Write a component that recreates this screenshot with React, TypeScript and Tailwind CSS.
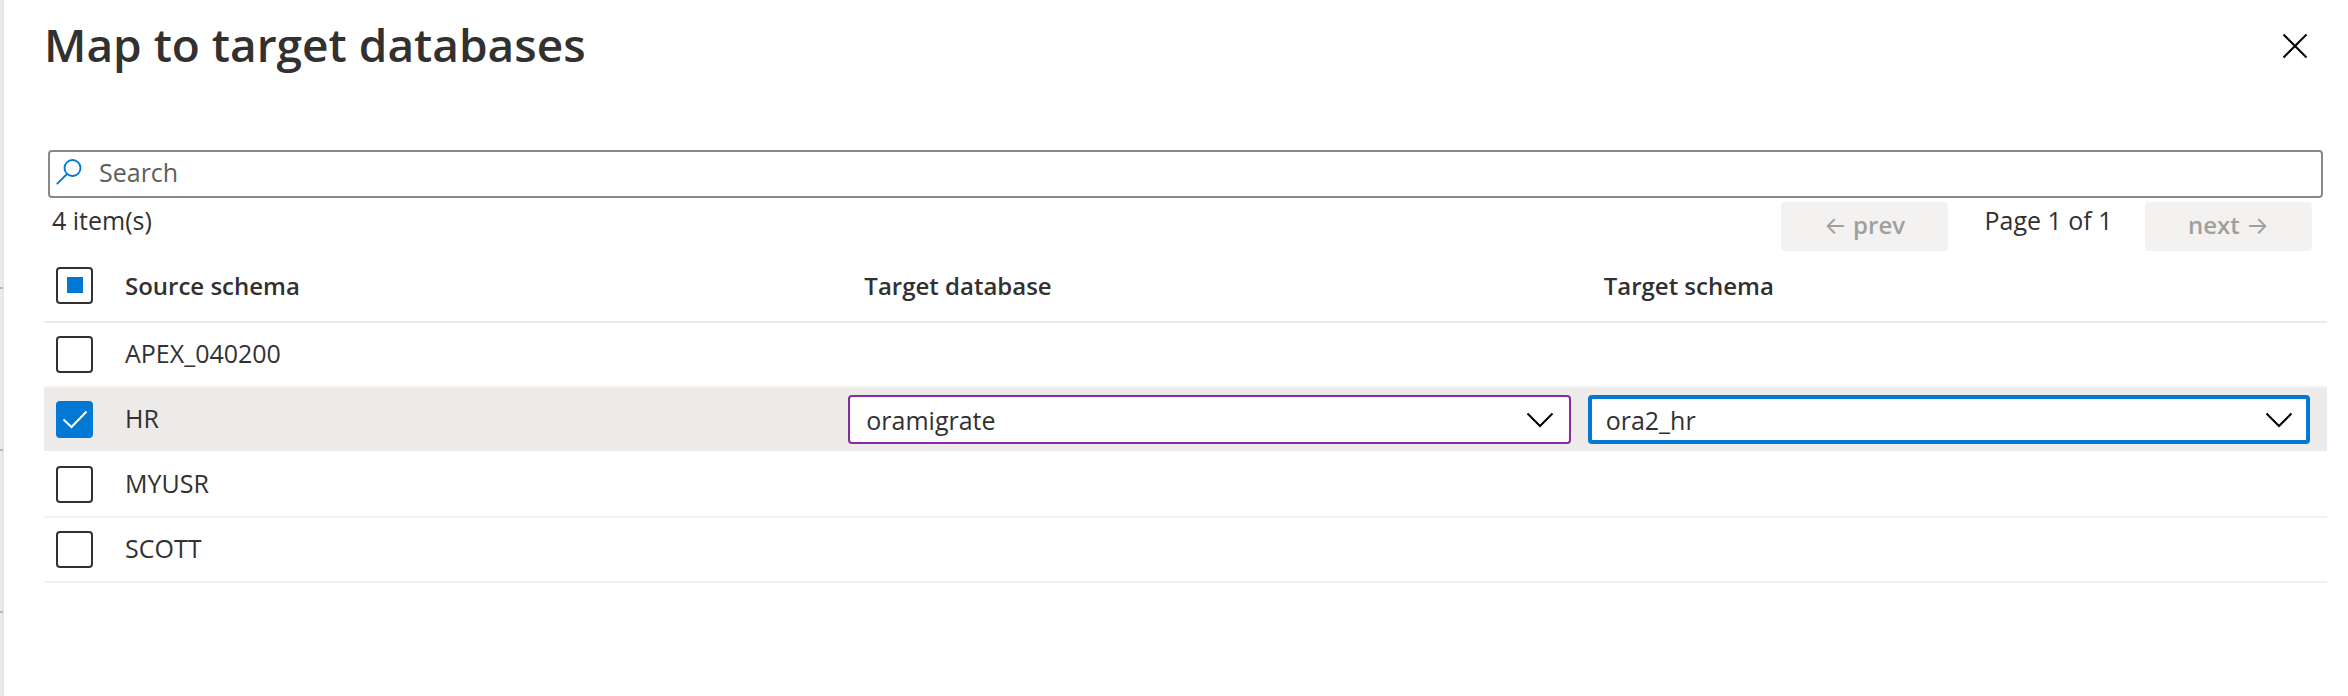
import { useEffect, useRef, useState } from "react";

const schemas = ["APEX_040200", "HR", "MYUSR", "SCOTT"];

type CheckboxProps = {
  label: string;
  checked: boolean;
  mixed?: boolean;
  onChange: (checked: boolean) => void;
};

function Checkbox({ label, checked, mixed = false, onChange }: CheckboxProps) {
  const ref = useRef<HTMLInputElement>(null);
  useEffect(() => {
    if (ref.current) ref.current.indeterminate = mixed;
  }, [mixed]);
  return (
    <span className="grid size-[37px] place-items-center">
      <input
        ref={ref}
        type="checkbox"
        aria-label={label}
        checked={checked}
        onChange={(e) => onChange(e.target.checked)}
        className="col-start-1 row-start-1 size-[37px] appearance-none rounded border-2 border-[#323130] bg-white checked:border-[#0078d4] checked:bg-[#0078d4]"
      />
      {mixed && <span className="pointer-events-none col-start-1 row-start-1 size-4 bg-[#0078d4]" />}
      {checked && (
        <svg viewBox="0 0 37 37" className="pointer-events-none col-start-1 row-start-1 size-[37px]" fill="none" stroke="white" strokeWidth="2">
          <path d="M7.5 18.5 L15.5 26 L30.5 10.5" />
        </svg>
      )}
    </span>
  );
}

type DropdownProps = { label: string; value: string; active?: boolean };

function Dropdown({ label, value, active = false }: DropdownProps) {
  return (
    <div className="grid items-center pr-[17px]">
      <select
        aria-label={label}
        defaultValue={value}
        className={
          "col-start-1 row-start-1 h-[49px] w-full appearance-none rounded bg-white pt-0.5 pr-14 outline-none " +
          (active ? "border-4 border-[#0078d4] pl-3.5" : "border-2 border-[#8c28a5] pl-4")
        }
      >
        <option>{value}</option>
      </select>
      <svg viewBox="0 0 28 16" className="pointer-events-none col-start-1 row-start-1 mr-[17px] h-4 w-7 justify-self-end" fill="none" stroke="black" strokeWidth="2">
        <path d="M1.5 1.5 L14 14 L26.5 1.5" />
      </svg>
    </div>
  );
}

export default function App() {
  const [selected, setSelected] = useState<string[]>(["HR"]);
  const all = selected.length === schemas.length;
  const toggle = (name: string, on: boolean) =>
    setSelected((s) => (on ? [...s, name] : s.filter((n) => n !== name)));

  return (
    <div className="flex min-h-screen bg-white font-['Open_Sans','Noto_Sans',sans-serif] text-[25px] text-[#323130]">
      <div className="flex w-1 shrink-0 flex-col gap-40 bg-linear-to-r from-[#ededed] to-[#e3e3e3] pt-[287px]">
        <span className="h-0.5 w-[3px] bg-[#b8b8b8]" />
        <span className="h-0.5 w-[3px] bg-[#b8b8b8]" />
        <span className="h-0.5 w-[3px] bg-[#b8b8b8]" />
      </div>
      <main className="min-w-0 flex-1 pr-[21px] pl-10">
        <header className="flex h-[150px] items-start justify-between pt-2">
          <h1 className="text-[46px] leading-[72px] font-semibold">Map to target databases</h1>
          <button type="button" aria-label="Close" className="mt-5 mr-3.5 grid size-9 place-items-center">
            <svg viewBox="0 0 26 26" className="size-[26px]" fill="none" stroke="black" strokeWidth="2">
              <path d="M1.5 1.5 L24.5 24.5 M24.5 1.5 L1.5 24.5" />
            </svg>
          </button>
        </header>

        <label className="mr-1 ml-1 flex h-12 items-center rounded border-2 border-[#8a8886] pl-1.5">
          <svg viewBox="0 0 26 26" className="mb-1 size-[26px] shrink-0" fill="none" stroke="#0078d4" strokeWidth="1.8">
            <circle cx="16.5" cy="9" r="8" />
            <path d="M11 15 L0.8 25.2" />
          </svg>
          <input type="text" aria-label="Search" placeholder="Search" className="ml-[17px] min-w-0 flex-1 pb-0.5 outline-none placeholder:text-[#605e5c]" />
        </label>

        <div className="flex h-[49px] items-start pr-[15px] pl-2">
          <p className="leading-[44px]">4 item(s)</p>
          <div className="ml-auto flex items-start">
            <button type="button" disabled className="mt-1 h-[49px] w-[167px] rounded bg-[#f3f2f1] pb-0.5 text-2xl font-semibold text-[#a19f9d]">
              <span className="font-['Inter'] font-normal">←</span> prev
            </button>
            <p className="w-[197px] pl-1 text-center leading-[44px]">Page 1 of 1</p>
            <button type="button" disabled className="mt-1 h-[49px] w-[167px] rounded bg-[#f3f2f1] pb-0.5 text-2xl font-semibold text-[#a19f9d]">
              next <span className="font-['Inter'] font-normal">→</span>
            </button>
          </div>
        </div>

        <table className="w-full table-fixed border-collapse text-left">
          <colgroup>
            <col className="w-[65px]" />
            <col />
            <col />
            <col />
          </colgroup>
          <thead className="text-2xl">
            <tr className="h-[76px] shadow-[inset_0_-2px_0_#edebe9]">
              <th className="p-0 pl-3">
                <Checkbox
                  label="Select all"
                  checked={all}
                  mixed={selected.length > 0 && !all}
                  onChange={(on) => setSelected(on ? schemas : [])}
                />
              </th>
              <th className="p-0 pt-0.5 pl-4 font-semibold">Source schema</th>
              <th className="p-0 pt-0.5 pl-4 font-semibold">Target database</th>
              <th className="p-0 pt-0.5 pl-4 font-semibold">Target schema</th>
            </tr>
          </thead>
          <tbody>
            {schemas.map((name) => {
              const on = selected.includes(name);
              return (
                <tr
                  key={name}
                  className={"h-[65px] " + (on ? "bg-[#edebe9] shadow-[inset_0_-2px_0_#ffffff]" : "shadow-[inset_0_-2px_0_#f3f2f1]")}
                >
                  <td className="p-0 pb-0.5 pl-3">
                    <Checkbox label={"Select " + name} checked={on} onChange={(v) => toggle(name, v)} />
                  </td>
                  <td className="p-0 pb-1 pl-4">{name}</td>
                  <td className="p-0 pb-0.5">{on && <Dropdown label="Target database" value="oramigrate" />}</td>
                  <td className="p-0 pb-0.5">{on && <Dropdown label="Target schema" value="ora2_hr" active />}</td>
                </tr>
              );
            })}
          </tbody>
        </table>
      </main>
    </div>
  );
}
